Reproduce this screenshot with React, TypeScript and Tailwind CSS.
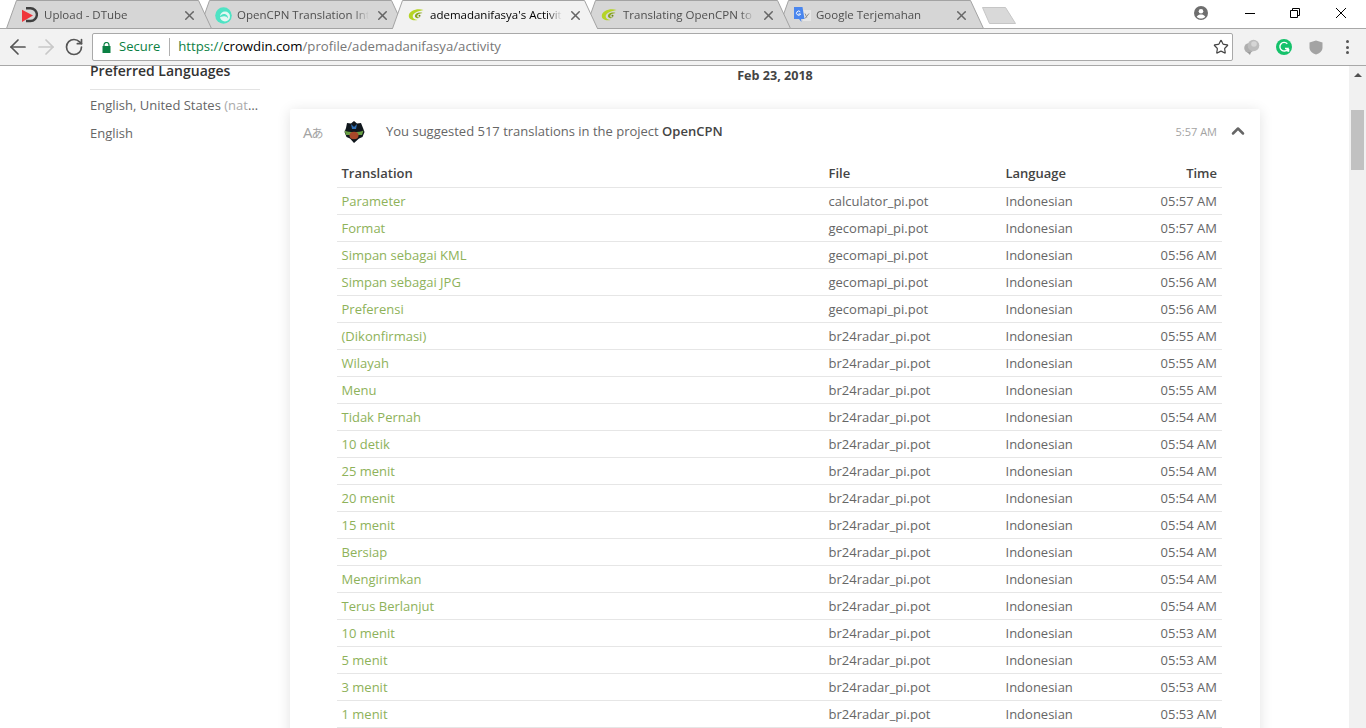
import React from "react";
import { ArrowLeft, ArrowRight, RotateCw, Star, ChevronUp, X } from "lucide-react";

const DTubeIcon = () => (
  <svg width="16" height="16" viewBox="0 0 16 16">
    <path d="M4 1.200h4.500a6.300 6.300 0 0 1 0 12.800H4" fill="none" stroke="#3f3f3f" strokeWidth="2.400" />
    <path d="M0 2.800L11 8.500L0 15z" fill="#f0353b" />
  </svg>
);
const RingIcon = () => (
  <svg width="17" height="17" viewBox="0 0 17 17">
    <circle cx="8.500" cy="8.500" r="8.300" fill="#4fe3c4" />
    <circle cx="10" cy="9.500" r="5" fill="#e4f8f3" />
    <path d="M4.500 10.500c.6-2.800 3.500-4.200 6-3.300 1.900.7 2.800 2.500 2.300 4.200-.6-1.500-2-2.300-3.800-2.200-1.800.1-3.400.7-4.500 1.300z" fill="#4fe3c4" />
  </svg>
);
const CrowdinIcon = () => (
  <svg width="16" height="16" viewBox="0 0 16 16">
    <path d="M15.500 3C9.500 1 1 3.500 0.800 8.800c-.1 3.600 4 5.300 8.700 4.200-3-.2-5-1.700-4.800-4C5 6 10.500 4 15.500 3z" fill="#b5d426" />
    <path d="M14.500 6C11 4.700 6.800 6.500 6.900 9.300c.1 1.800 2.800 2.500 5.300 1.200-1.700.2-3-.4-3-1.600C9.200 7.500 11.500 6.500 14.500 6z" fill="#8aa81c" />
    <circle cx="11.500" cy="8.800" r="1" fill="#6d8717" />
  </svg>
);
const GTranslateIcon = () => (
  <svg width="17" height="16" viewBox="0 0 17 16">
    <path d="M7 3h10v11H9z" fill="#e6e6e6" />
    <path d="M11 6.500l1.800 4M15 6.500l-4 5" stroke="#8f8f8f" strokeWidth="1" fill="none" />
    <path d="M0 0h8.500l2 12H7l.5 3L5 12H0z" fill="#4a86ee" />
    <path d="M6.300 4.800A2.100 2.100 0 1 0 6.600 7H4.500" stroke="#fff" strokeWidth="1" fill="none" />
  </svg>
);

const tabs = [
  { title: "Upload - DTube", icon: <DTubeIcon /> },
  { title: "OpenCPN Translation Interface", icon: <RingIcon /> },
  { title: "ademadanifasya's Activity", icon: <CrowdinIcon />, active: true },
  { title: "Translating OpenCPN to Indonesian", icon: <CrowdinIcon /> },
  { title: "Google Terjemahan", icon: <GTranslateIcon /> },
];

const Tab = ({ t, z }: { t: (typeof tabs)[number]; z: number }) => (
  <div className="relative h-[28px] w-[193px] shrink-0" style={{ zIndex: t.active ? 20 : z }}>
    <svg className="absolute left-0 top-0" width="207" height="29" viewBox="0 0 207 29">
      <path
        d="M0.500 28.500L10.500 0.500H192.500L205.500 28.500"
        fill={t.active ? "#f2f2f2" : "#d6d6d6"}
        stroke="#a3a3a3"
        strokeWidth="1"
      />
      <path d="M1 28.500H205" stroke={t.active ? "#f2f2f2" : "#a3a3a3"} strokeWidth="1" />
    </svg>
    <div className="relative flex h-[30px] items-center pl-[16px]">
      <span className="flex w-[22px] shrink-0">{t.icon}</span>
      <span
        className={`w-[136px] shrink-0 overflow-hidden whitespace-nowrap text-[11.500px] [mask-image:linear-gradient(to_right,black_86%,transparent_97%)] ${
          t.active ? "text-black" : "text-[#4f4f4f]"
        }`}
      >
        {t.title}
      </span>
      <X size={15} strokeWidth={2.400} className="ml-[2px] shrink-0 text-[#666]" />
    </div>
  </div>
);

const rows: [string, string, string][] = [
  ["Parameter", "calculator_pi.pot", "05:57 AM"],
  ["Format", "gecomapi_pi.pot", "05:57 AM"],
  ["Simpan sebagai KML", "gecomapi_pi.pot", "05:56 AM"],
  ["Simpan sebagai JPG", "gecomapi_pi.pot", "05:56 AM"],
  ["Preferensi", "gecomapi_pi.pot", "05:56 AM"],
  ["(Dikonfirmasi)", "br24radar_pi.pot", "05:55 AM"],
  ["Wilayah", "br24radar_pi.pot", "05:55 AM"],
  ["Menu", "br24radar_pi.pot", "05:55 AM"],
  ["Tidak Pernah", "br24radar_pi.pot", "05:54 AM"],
  ["10 detik", "br24radar_pi.pot", "05:54 AM"],
  ["25 menit", "br24radar_pi.pot", "05:54 AM"],
  ["20 menit", "br24radar_pi.pot", "05:54 AM"],
  ["15 menit", "br24radar_pi.pot", "05:54 AM"],
  ["Bersiap", "br24radar_pi.pot", "05:54 AM"],
  ["Mengirimkan", "br24radar_pi.pot", "05:54 AM"],
  ["Terus Berlanjut", "br24radar_pi.pot", "05:54 AM"],
  ["10 menit", "br24radar_pi.pot", "05:53 AM"],
  ["5 menit", "br24radar_pi.pot", "05:53 AM"],
  ["3 menit", "br24radar_pi.pot", "05:53 AM"],
  ["1 menit", "br24radar_pi.pot", "05:53 AM"],
  ["30 detik", "br24radar_pi.pot", "05:53 AM"],
];

const gridCols = "grid grid-cols-[487px_177px_1fr_auto] pl-[4.500px] pr-[5px]";

export default function App() {
  return (
    <div className="flex h-[728px] w-[1366px] flex-col overflow-hidden bg-white font-['Open_Sans',sans-serif]">
      {/* Title bar */}
      <div className="relative z-10 flex h-[28px] shrink-0 bg-white">
        <div className="flex pl-[6px]">
          {tabs.map((t, i) => (
            <Tab key={i} t={t} z={10 - i} />
          ))}
          <svg className="ml-[10px] mt-[7px]" width="36" height="18" viewBox="0 0 36 18">
            <path d="M1.500 0.500H24.500L34.500 16.500H8.500z" fill="#d9d9d9" stroke="#c6c6c6" strokeLinejoin="round" />
          </svg>
        </div>
        <div className="ml-auto flex items-center">
          <svg className="-mt-[2px] mr-[37px]" width="14" height="14" viewBox="0 0 14 14">
            <circle cx="7" cy="7" r="7" fill="#6e6e6e" />
            <circle cx="7" cy="5.200" r="2.300" fill="#fff" />
            <path d="M2.700 10.800c1-1.800 2.600-2.300 4.300-2.300s3.300.5 4.300 2.300c-1 1.200-2.600 1.800-4.300 1.800s-3.300-.6-4.300-1.800z" fill="#fff" />
          </svg>
          <svg className="-mt-[2px] mr-[35px]" width="10" height="10" viewBox="0 0 10 10" fill="none" stroke="#000">
            <path d="M0 5.500h10" />
          </svg>
          <svg className="-mt-[2px] mr-[36px]" width="10" height="10" viewBox="0 0 10 10" fill="none" stroke="#000">
            <path d="M0.500 2.500h7v7h-7z" />
            <path d="M2.500 2.500v-2h7v7h-2" />
          </svg>
          <svg className="-mt-[2px] mr-[20px]" width="10" height="10" viewBox="0 0 10 10" fill="none" stroke="#000">
            <path d="M0 0l10 10M10 0l-10 10" />
          </svg>
        </div>
      </div>

      {/* Toolbar */}
      <div className="flex h-[38px] shrink-0 items-center border-y border-[#a8a8a8] bg-[#f2f2f2] pl-[6px]">
        <ArrowLeft size={24} strokeWidth={1.700} className="text-[#555]" />
        <ArrowRight size={24} strokeWidth={1.700} className="ml-[4px] text-[#c8c8c8]" />
        <RotateCw size={20} strokeWidth={2} className="ml-[6px] text-[#555]" />
        <div className="ml-[8px] flex h-[28px] w-[1141px] items-center rounded-[2px] border border-[#a9a9a9] bg-white pl-[9px] pr-[4px]">
          <svg width="9" height="11" viewBox="0 0 9 11">
            <path d="M2 4.500V3a2.500 2.500 0 0 1 5 0v1.500" fill="none" stroke="#0b8043" strokeWidth="1.200" />
            <rect x="0.500" y="4" width="8" height="7" fill="#0b8043" />
          </svg>
          <span className="ml-[8px] text-[13px] text-[#0b8043]">Secure</span>
          <span className="ml-[9px] h-[18px] w-px bg-[#b0b0b0]" />
          <span className="ml-[8px] whitespace-nowrap text-[13.200px]">
            <span className="text-[#0b8043]">https://</span>
            <span className="text-black">crowdin.com</span>
            <span className="text-[#777]">/profile/ademadanifasya/activity</span>
          </span>
          <Star size={16} strokeWidth={1.800} className="ml-auto -mr-[1px] text-[#444]" />
        </div>
        <div className="ml-[11px] flex items-center">
          <svg width="16" height="16" viewBox="0 0 16 16">
            <circle cx="5" cy="9" r="4.800" fill="#aeaeae" />
            <circle cx="9.500" cy="6.500" r="5.800" fill="#bdbdbd" />
            <circle cx="10" cy="5" r="2.800" fill="#d6d6d6" />
            <path d="M3 13l3 3 1-3z" fill="#9a9a9a" />
          </svg>
          <svg className="ml-[16px]" width="16" height="16" viewBox="0 0 16 16">
            <circle cx="8" cy="8" r="8" fill="#15c26b" />
            <path d="M11.300 4.700A4.300 4.300 0 1 0 12.100 9.500H9M10.500 11.500l2 .5.2-2" fill="none" stroke="#fff" strokeWidth="1.400" />
          </svg>
          <svg className="ml-[17px]" width="14" height="15" viewBox="0 0 14 15">
            <path d="M7 0.500l6.500 2v5c0 3.500-3 6-6.500 7-3.500-1-6.500-3.500-6.500-7v-5z" fill="#a3a3a3" />
          </svg>
          <div className="ml-[23px] flex flex-col gap-[2.500px]">
            <span className="h-[3px] w-[3px] rounded-full bg-[#555]" />
            <span className="h-[3px] w-[3px] rounded-full bg-[#555]" />
            <span className="h-[3px] w-[3px] rounded-full bg-[#555]" />
          </div>
        </div>
      </div>

      {/* Page */}
      <div className="flex min-h-0 flex-1">
        <main className="flex min-w-0 flex-1 overflow-hidden bg-white pl-[90px]">
          <aside className="w-[170px] shrink-0">
            <h3 className="mt-[-5px] border-b border-[#e3e3e3] pb-[9px] text-[14px] font-semibold leading-[19px] text-[#333]">
              Preferred Languages
            </h3>
            <p className="mt-[5px] truncate text-[13px] leading-[20px] text-[#666]">
              English, United States <span className="text-[#aaa]">(native)</span>
            </p>
            <p className="mt-[8px] text-[13px] leading-[20px] text-[#666]">English</p>
          </aside>
          <section className="ml-[30px] w-[970px] shrink-0">
            <div className="pt-[1px] text-center text-[12.600px] font-bold leading-[17px] text-[#444]">Feb 23, 2018</div>
            <div className="mt-[25px] rounded-[2px] bg-white pb-4 shadow-[0_2px_14px_rgba(0,0,0,0.12)]">
              <div className="flex h-[44px] items-center pl-[13px] pr-[13px] pt-[2px]">
                <span className="w-[40px] whitespace-nowrap text-[#a3a3a3] font-['Open_Sans','Noto_Sans_CJK_JP',sans-serif]">
                  <span className="text-[15px]">A</span>
                  <span className="-ml-[1px] text-[12px]">あ</span>
                </span>
                <svg width="22" height="22" viewBox="0 0 22 22">
                  <path d="M11 0l3 2.500 4-.5 2 5 1.500 4-2 5-3.500 1.500L11 22l-4-4.500L3.500 16l-2-5L3 7l1-5 4 .5z" fill="#10171d" />
                  <path d="M8 3l3 3 3-3-1 5H9z" fill="#2f6fb5" />
                  <path d="M1.500 9.500c4 2 15 2 19 0l-1.500 4.500H3z" fill="#6aa045" />
                  <ellipse cx="11" cy="14.500" rx="4.500" ry="3.700" fill="#a8482a" />
                </svg>
                <span className="ml-[21px] text-[13px] text-[#666]">
                  You suggested 517 translations in the project <span className="font-semibold text-[#444]">OpenCPN</span>
                </span>
                <span className="ml-auto text-[11px] text-[#a3a3a3]">5:57 AM</span>
                <ChevronUp size={20} strokeWidth={3} className="ml-[11px] -mt-[3px] -mr-[1px] text-[#666]" />
              </div>
              <div className="ml-[47px] mr-[38px] text-[13px]">
                <div className={`${gridCols} h-[35px] items-center border-b border-[#e6e6e6] pt-[7px] font-semibold text-[#444]`}>
                  <span>Translation</span>
                  <span>File</span>
                  <span>Language</span>
                  <span className="text-right">Time</span>
                </div>
                {rows.map((r, i) => (
                  <div key={i} className={`${gridCols} h-[27px] items-center border-b border-[#e6e6e6] pt-[2px] text-[#666]`}>
                    <span className="text-[#8eb25a]">{r[0]}</span>
                    <span>{r[1]}</span>
                    <span>Indonesian</span>
                    <span className="text-right">{r[2]}</span>
                  </div>
                ))}
              </div>
            </div>
          </section>
        </main>
        {/* Scrollbar */}
        <div className="flex w-[17px] shrink-0 flex-col items-center bg-[#f1f1f1] pt-[7px]">
          <div className="h-0 w-0 border-x-[4px] border-b-[4px] border-x-transparent border-b-[#505050]" />
          <div className="mt-[33px] h-[60px] w-[13px] bg-[#c1c1c1]" />
        </div>
      </div>
    </div>
  );
}
